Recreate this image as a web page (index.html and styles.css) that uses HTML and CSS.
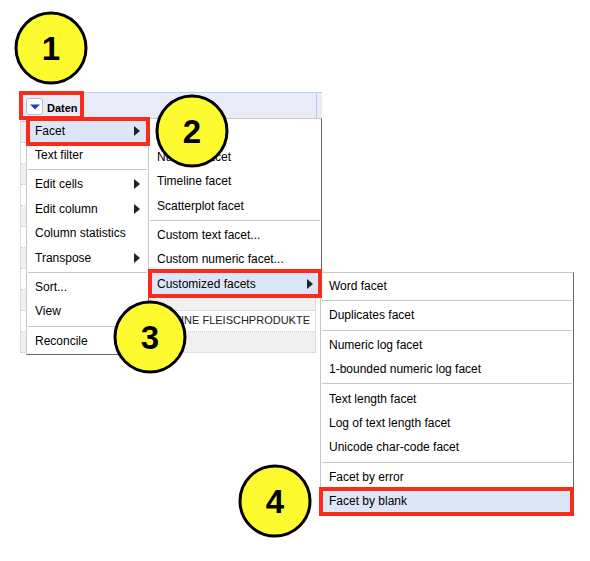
FILE: index.html
```
<!DOCTYPE html>
<html lang="en">
<head>
<meta charset="utf-8">
<title>Facet by blank</title>
<link rel="stylesheet" href="styles.css">
</head>
<body>
<main class="stage">
  <div class="grid">
    <div class="grid-head"><span class="drop"><svg width="10" height="6" viewBox="0 0 10 6"><path d="M0 .5h10L5 5.5z" fill="#1c3fc4"/></svg></span><b>Daten</b></div>
    <div class="grid-body">
      <div class="row"></div><div class="row"></div><div class="row"></div><div class="row"></div>
      <div class="row"></div><div class="row"></div><div class="row"></div><div class="row"></div>
      <div class="row"></div><div class="row"><span>FEINE FLEISCHPRODUKTE</span></div><div class="row"></div>
    </div>
  </div>

  <nav class="menu menu-main">
    <div class="item active sub">Facet</div>
    <div class="item">Text filter</div>
    <hr>
    <div class="item sub">Edit cells</div>
    <div class="item sub">Edit column</div>
    <div class="item">Column statistics</div>
    <div class="item sub">Transpose</div>
    <hr>
    <div class="item">Sort...</div>
    <div class="item">View</div>
    <hr>
    <div class="item">Reconcile</div>
  </nav>

  <nav class="menu menu-facet">
    <div class="item"></div>
    <div class="item">Numeric facet</div>
    <div class="item">Timeline facet</div>
    <div class="item">Scatterplot facet</div>
    <hr>
    <div class="item">Custom text facet...</div>
    <div class="item">Custom numeric facet...</div>
    <div class="item active sub">Customized facets</div>
  </nav>

  <nav class="menu menu-custom">
    <div class="item">Word facet</div>
    <hr>
    <div class="item">Duplicates facet</div>
    <hr>
    <div class="item">Numeric log facet</div>
    <div class="item">1-bounded numeric log facet</div>
    <hr>
    <div class="item">Text length facet</div>
    <div class="item">Log of text length facet</div>
    <div class="item">Unicode char-code facet</div>
    <hr>
    <div class="item">Facet by error</div>
    <div class="item active">Facet by blank</div>
  </nav>

  <div class="mark mark-1"></div>
  <div class="mark mark-2"></div>
  <div class="mark mark-3"></div>
  <div class="mark mark-4"></div>

  <div class="step step-1">1</div>
  <div class="step step-2">2</div>
  <div class="step step-3">3</div>
  <div class="step step-4">4</div>
</main>
</body>
</html>
```

FILE: styles.css
```
* { box-sizing: border-box; }
body { margin: 0; background: #fff; color: #000; font: 12px/14px "Liberation Sans", Arial, sans-serif; }
.stage { position: relative; width: 590px; height: 561px; overflow: hidden; padding: 92px 0 0 20px; }

.grid { width: 302px; }
.grid-head { display: flex; align-items: center; gap: 4px; height: 30px; padding: 0 0 1px 6px; background: linear-gradient(90deg, transparent 296px, #b9c9f3 296px 297px, transparent 297px) 0 0 / 302px 100% no-repeat, #e9ecf7; border-top: 1px solid #bccbfa; border-bottom: 1px solid #bccbfa; }
.grid-head b { padding-top: 3px; font-size: 11px; }
.drop { display: flex; align-items: center; justify-content: center; width: 17px; height: 17px; background: #fff; border: 1px solid #a9bcf5; border-radius: 3px; }
.grid-body { width: 296px; border-left: 1px solid #ddd; border-right: 1px solid #ddd; }
.row { display: flex; justify-content: flex-end; align-items: center; height: 21px; padding: 0 5px 2px 0; border-bottom: 1px dotted #ccc; color: #222; font-size: 11px; }
.row:nth-child(odd) { background: #f0f0f0; }

.menu { position: absolute; background: #fff; border: 1px solid #c8c8c8; border-right-color: #666; border-bottom-color: #666; padding: 1px; }
.menu-main { left: 26px; top: 117px; width: 123px; height: 238px; padding-top: 0.4px; }
.menu-facet { left: 148px; top: 118px; width: 174px; height: 180px; padding-top: 1.3px; }
.menu-custom { left: 320px; top: 272px; width: 254px; height: 243px; padding-top: 0.8px; }
.item { display: flex; align-items: center; justify-content: space-between; height: 24.4px; padding: 0 7px; white-space: nowrap; }
.menu hr { height: 1px; margin: 2px 0; border: 0; background: #c8c8c8; }
.active { background: #dde6f6; }
.sub::after { content: ""; border-left: 6px solid #222; border-top: 5px solid transparent; border-bottom: 5px solid transparent; }

.mark { position: absolute; border: 4px solid #fb2b1a; }
.mark-1 { left: 19px; top: 91px; width: 65px; height: 29px; }
.mark-2 { left: 26px; top: 117px; width: 124px; height: 29px; }
.mark-3 { left: 148px; top: 269px; width: 174px; height: 29px; }
.mark-4 { left: 319px; top: 487px; width: 255px; height: 29px; }

.step { position: absolute; display: flex; align-items: center; justify-content: center; width: 73px; height: 73px; border: 3px solid #000; border-radius: 50%; background: #fdfb2f; font-size: 33px; line-height: 36px; font-weight: bold; transform: translate(-0.5px, -0.5px); }
.step-1 { left: 15px; top: 12px; }
.step-2 { left: 156px; top: 95px; }
.step-3 { left: 114px; top: 301px; }
.step-4 { left: 239px; top: 465px; }
```
